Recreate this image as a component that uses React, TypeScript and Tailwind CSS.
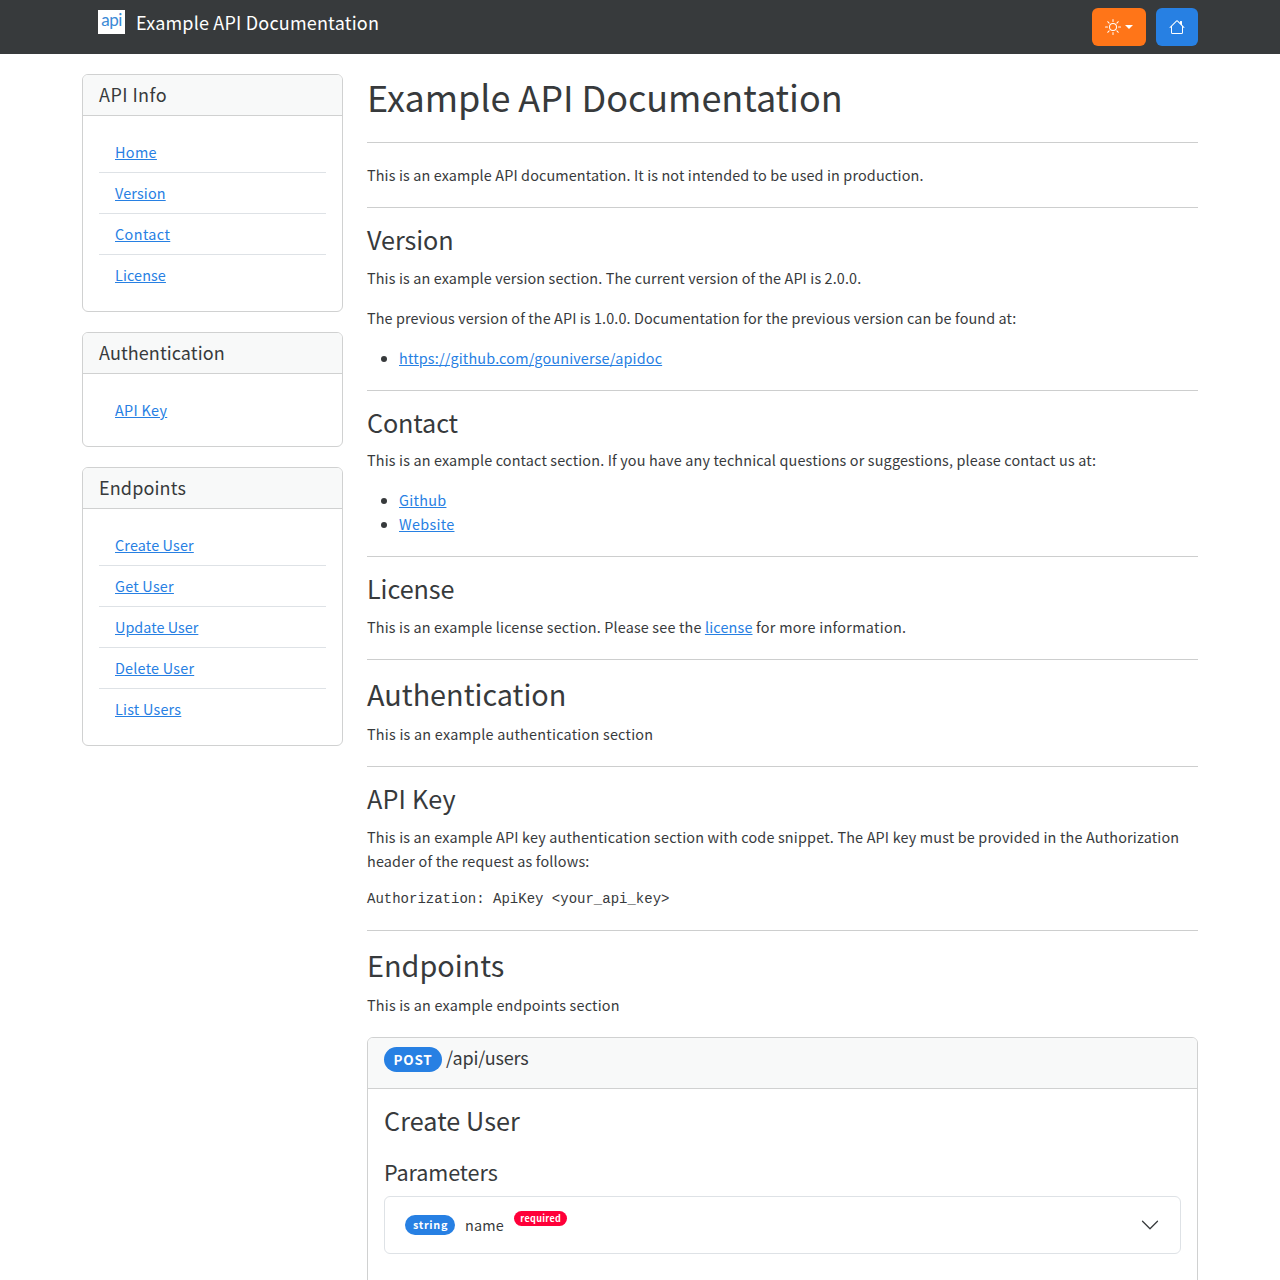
import React from 'react';
import { BsSun, BsHouse } from 'react-icons/bs';

function Hr({ className }: { className: string }) {
  return <hr className={`border-0 border-t border-[#373a3c]/25 ${className}`} />;
}

function Link({ children }: { children: React.ReactNode }) {
  return (
    <a href="#" className="text-[#2780e3] underline">
      {children}
    </a>
  );
}

function H2({ children }: { children: React.ReactNode }) {
  return <h2 className="-mt-px mb-[9px] text-[28.8px] leading-[38.4px] tracking-normal">{children}</h2>;
}

function H3({ children, className = 'tracking-[-0.06px]' }: { children: React.ReactNode; className?: string }) {
  return <h3 className={`-mt-px mb-[9px] text-[25.2px] leading-[33.6px] ${className}`}>{children}</h3>;
}

type Item = { label: string; tracking: string };

function MenuCard({ title, titleTracking, items }: { title: string; titleTracking: string; items: Item[] }) {
  return (
    <div className="mb-5 rounded-md border border-[#d0d1d1]">
      <div
        className={`rounded-t-[5px] border-b border-[#d0d1d1] bg-[#f8f9f9] px-4 pb-[9px] pt-[7px] text-[18px] leading-6 ${titleTracking}`}
      >
        {title}
      </div>
      <ul className="p-4">
        {items.map((item) => (
          <li key={item.label} className={`border-b border-[#dee2e6] px-4 py-2 last:border-b-0 ${item.tracking}`}>
            <Link>{item.label}</Link>
          </li>
        ))}
      </ul>
    </div>
  );
}

const infoItems: Item[] = [
  { label: 'Home', tracking: 'tracking-[0.35px]' },
  { label: 'Version', tracking: 'tracking-[0.14px]' },
  { label: 'Contact', tracking: 'tracking-[0.4px]' },
  { label: 'License', tracking: 'tracking-[0.1px]' },
];
const authItems: Item[] = [{ label: 'API Key', tracking: 'tracking-[0.32px]' }];
const endpointItems: Item[] = [
  { label: 'Create User', tracking: 'tracking-[0.14px]' },
  { label: 'Get User', tracking: 'tracking-[0.24px]' },
  { label: 'Update User', tracking: 'tracking-[0.02px]' },
  { label: 'Delete User', tracking: 'tracking-[0.22px]' },
  { label: 'List Users', tracking: 'tracking-[0.22px]' },
];

export default function App() {
  return (
    <div className="h-[1280px] overflow-hidden bg-white font-['Noto_Sans_CJK_SC','Noto_Sans',sans-serif] text-[14.4px] leading-6 tracking-[0.14px] text-[#373a3c]">
      <nav className="h-[54px] bg-[#373a3c]">
        <div className="mx-auto flex w-[1116px] items-start justify-between pt-2">
          <a href="#" className="flex items-start pl-4 text-white">
            <span className="mt-0.5 flex h-6 w-[27px] justify-center bg-white font-[Lato,sans-serif] text-[17px] leading-5 tracking-[-0.6px] text-[#3b8ad6]">
              api
            </span>
            <span className="ml-[11px] mt-0.5 text-[18px] leading-6 tracking-[0.19px]">Example API Documentation</span>
          </a>
          <div className="flex gap-2.5 text-white">
            <button className="flex h-[38px] w-[54px] items-center justify-center gap-1 rounded-md bg-[#ff7518]">
              <BsSun size={16} />
              <span className="border-x-[4.8px] border-t-[4.8px] border-x-transparent border-t-white" />
            </button>
            <button className="flex h-[38px] w-[42px] items-center justify-center rounded-md bg-[#2780e3]">
              <BsHouse size={16} />
            </button>
          </div>
        </div>
      </nav>
      <div className="mx-auto flex w-[1116px] gap-6 pt-5">
        <aside className="w-[261px] shrink-0">
          <MenuCard title="API Info" titleTracking="tracking-[0.44px]" items={infoItems} />
          <MenuCard title="Authentication" titleTracking="tracking-[0.08px]" items={authItems} />
          <MenuCard title="Endpoints" titleTracking="tracking-[0.14px]" items={endpointItems} />
        </aside>
        <main className="w-[831px]">
          <h1 className="-mt-0.5 mb-[22px] text-[36px] leading-[48px] tracking-[-0.04px]">Example API Documentation</h1>
          <Hr className="mb-5" />
          <p className="tracking-[0.13px]">
            This is an example API documentation. It is not intended to be used in production.
          </p>
          <Hr className="mb-4 mt-5" />
          <H3>Version</H3>
          <p className="mb-4 tracking-[0.127px]">
            This is an example version section. The current version of the API is 2.0.0.
          </p>
          <p className="mb-4 tracking-[0.105px]">
            The previous version of the API is 1.0.0. Documentation for the previous version can be found at:
          </p>
          <ul className="list-disc pl-8 tracking-[0.17px]">
            <li>
              <Link>https://github.com/gouniverse/apidoc</Link>
            </li>
          </ul>
          <Hr className="mb-4 mt-5" />
          <H3 className="tracking-[-0.12px]">Contact</H3>
          <p className="mb-4 tracking-[0.15px]">
            This is an example contact section. If you have any technical questions or suggestions, please contact us at:
          </p>
          <ul className="list-disc pl-8 tracking-[0.3px]">
            <li>
              <Link>Github</Link>
            </li>
            <li>
              <Link>Website</Link>
            </li>
          </ul>
          <Hr className="mb-4 mt-5" />
          <H3>License</H3>
          <p className="tracking-[0.16px]">
            This is an example license section. Please see the <Link>license</Link>
            <span className="tracking-[0.28px]"> for more information.</span>
          </p>
          <Hr className="mb-4 mt-5" />
          <H2>Authentication</H2>
          <p className="tracking-[0.23px]">This is an example authentication section</p>
          <Hr className="mb-4 mt-5" />
          <H3 className="tracking-[0.18px]">API Key</H3>
          <p className="mb-4 tracking-[0.174px]">
            This is an example API key authentication section with code snippet. The API key must be provided in the
            Authorization header of the request as follows:
          </p>
          <pre className="font-['Liberation_Mono',monospace] text-[14px] leading-[21px] tracking-normal">
            {'Authorization: ApiKey <your_api_key>'}
          </pre>
          <Hr className="mb-4 mt-5" />
          <H2>Endpoints</H2>
          <p className="tracking-[0.19px]">This is an example endpoints section</p>
          <div className="mt-5 h-[400px] rounded-md border border-[#d0d1d1]">
            <div className="flex h-[51px] items-start rounded-t-[5px] border-b border-[#d0d1d1] bg-[#f8f9f9] px-4 pt-[7px] text-[18px] leading-6">
              <span className="mt-0.5 flex h-[25px] w-[58px] justify-center rounded-full bg-[#2780e3] text-[13.5px] font-bold leading-6 tracking-[0.7px] text-white">
                POST
              </span>
              <span className="ml-1 tracking-[-0.16px]">/api/users</span>
            </div>
            <div className="p-4">
              <H3 className="tracking-[0.06px]">Create User</H3>
              <h4 className="mb-[9px] mt-5 text-[21.6px] leading-[28.8px] tracking-[-0.1px]">Parameters</h4>
              <div className="flex h-[58px] items-center rounded-md border border-[#dee2e6] px-5">
                <span className="flex h-5 w-[50px] justify-center rounded-full bg-[#2780e3] pl-px text-[10.8px] font-bold leading-[19px] tracking-[0.7px] text-white">
                  string
                </span>
                <span className="ml-2.5">name</span>
                <span className="mb-[13px] ml-2.5 flex h-[15px] w-[53px] items-center justify-center rounded-full bg-[#ff0039] pl-px text-[9px] font-bold leading-[15px] tracking-[0.35px] text-white">
                  required
                </span>
                <svg
                  viewBox="0 0 16 16"
                  className="ml-auto size-5"
                  fill="none"
                  stroke="#373a3c"
                  strokeLinecap="round"
                  strokeLinejoin="round"
                >
                  <path d="m2 5 6 6 6-6" />
                </svg>
              </div>
            </div>
          </div>
        </main>
      </div>
    </div>
  );
}
